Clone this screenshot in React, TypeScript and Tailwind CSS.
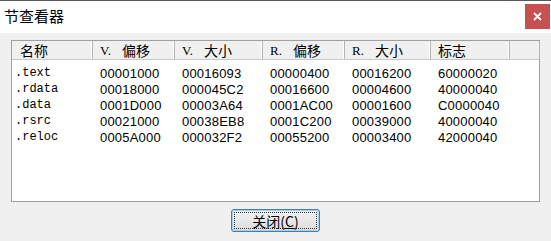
import React from 'react';

// column widths and header labels
const COLS = [
  { w: 'w-[81px]', prefix: '', label: '名称' },
  { w: 'w-[82px]', prefix: 'V.', label: '偏移' },
  { w: 'w-[88px]', prefix: 'V.', label: '大小' },
  { w: 'w-[82px]', prefix: 'R.', label: '偏移' },
  { w: 'w-[86px]', prefix: 'R.', label: '大小' },
  { w: 'w-[79px]', prefix: '', label: '标志' },
];

const ROWS = [
  ['.text', '00001000', '00016093', '00000400', '00016200', '60000020'],
  ['.rdata', '00018000', '000045C2', '00016600', '00004600', '40000040'],
  ['.data', '0001D000', '00003A64', '0001AC00', '00001600', 'C0000040'],
  ['.rsrc', '00021000', '00038EB8', '0001C200', '00039000', '40000040'],
  ['.reloc', '0005A000', '000032F2', '00055200', '00003400', '42000040'],
];

const CJK = "font-['Noto_Sans_CJK_SC',sans-serif]";

export default function App() {
  return (
    <div className="w-[551px] h-[241px] bg-[#f0f0f0] flex flex-col overflow-hidden text-black">
      {/* title bar */}
      <div className="h-[33px] bg-white border-t border-[#5a5a5a] flex items-start justify-between pl-[4px]">
        <span className={`${CJK} text-[15px] leading-none mt-[7px]`}>节查看器</span>
        <button className="w-[25px] h-[25px] mt-[3px] mr-[1px] bg-[#c75050] flex items-center justify-center">
          <svg width="9" height="9" viewBox="0 0 9 9">
            <path d="M1 1L8 8M8 1L1 8" stroke="white" strokeWidth="1.8" />
          </svg>
        </button>
      </div>

      {/* list view */}
      <div className="px-[11px] pt-[7px]">
        <div className="h-[162px] bg-white border border-[#a0a0a0] flex flex-col">
          <div className="flex h-[19px] bg-[#f0f0f0] border-b border-[#c8c8c8]">
            {COLS.map((c, i) => (
              <div
                key={i}
                className={`${c.w} shrink-0 h-full flex items-center border-r border-[#b4b4b4] shadow-[inset_-1px_0_0_#ffffff] ${i === 0 ? 'pl-[8px]' : 'pl-[7px]'}`}
              >
                {c.prefix && (
                  <span className="font-['Liberation_Serif',serif] text-[13px] leading-none mr-[11px]">{c.prefix}</span>
                )}
                <span className={`${CJK} text-[14px] leading-none`}>{c.label}</span>
              </div>
            ))}
            <div className="w-[30px] shrink-0 h-full border-r border-[#b4b4b4]" />
          </div>
          <div className="pt-[5px]">
            {ROWS.map((r) => (
              <div key={r[0]} className="flex h-[16px] items-center">
                {r.map((cell, j) => (
                  <div
                    key={j}
                    className={`${COLS[j].w} shrink-0 ${
                      j === 0
                        ? "pl-[3px] font-['Liberation_Mono',monospace] text-[12px]"
                        : "pl-[7px] font-['Liberation_Sans',sans-serif] text-[13px] tracking-[0.2px]"
                    } leading-none`}
                  >
                    {cell}
                  </div>
                ))}
              </div>
            ))}
          </div>
        </div>
      </div>

      {/* button row */}
      <div className="flex justify-center pt-[7px]">
        <button className="w-[89px] h-[23px] rounded-[3px] border border-[#3c7fb1] bg-gradient-to-b from-[#f4f4f4] to-[#dcdcdc] p-[2px] shadow-[inset_0_0_0_1px_#a8d0ee]">
          <div className="w-full h-full border border-dotted border-[#333] flex items-center justify-center">
            <span className={`${CJK} text-[14px] leading-none`}>
              关闭(<span className="underline">C</span>)
            </span>
          </div>
        </button>
      </div>
    </div>
  );
}
